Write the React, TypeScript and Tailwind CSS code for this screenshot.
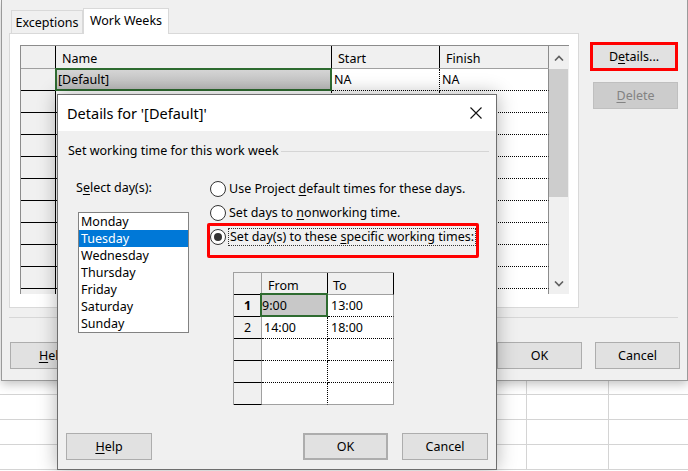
import type { ReactNode } from "react";

const ui = "font-['Noto_Sans',sans-serif]";

function U({ children }: { children: ReactNode }) {
  return <span className="underline underline-offset-[2px] decoration-1">{children}</span>;
}

function WinButton({
  children,
  className = "",
}: {
  children: ReactNode;
  className?: string;
}) {
  return (
    <div
      className={`h-[27px] flex items-center justify-center bg-[#e1e1e1] border border-[#adadad] text-black ${className}`}
    >
      {children}
    </div>
  );
}

function Chevron({ up }: { up?: boolean }) {
  return (
    <svg width="10" height="6" viewBox="0 0 10 6">
      <polyline
        points={up ? "1,5.5 5,1.5 9,5.5" : "1,0.5 5,4.5 9,0.5"}
        fill="none"
        stroke="#606060"
        strokeWidth="1.6"
      />
    </svg>
  );
}

function Radio({ checked }: { checked?: boolean }) {
  return (
    <div className="w-[16px] h-[16px] rounded-full border border-[#333] bg-white flex items-center justify-center shrink-0">
      {checked && <div className="w-[8px] h-[8px] rounded-full bg-[#333]" />}
    </div>
  );
}

function WeeksGrid() {
  const rows = Array.from({ length: 11 });
  return (
    <div className="flex w-[549px] h-[249px] border-t border-l border-[#8c8c8c] overflow-hidden">
      <div className="w-[528px] flex flex-col">
        <div className="flex h-[23px] shrink-0 bg-[#f0f0f0] border-b border-[#a0a0a0]">
          <div className="w-[35px] border-r border-black" />
          <div className="w-[276px] border-r border-black pl-[6px] pt-[5px]">Name</div>
          <div className="w-[108px] border-r border-black pl-[6px] pt-[5px]">Start</div>
          <div className="w-[109px] border-r border-[#8c8c8c] pl-[6px] pt-[5px]">Finish</div>
        </div>
        {rows.map((_, i) => (
          <div key={i} className="flex h-[22px] shrink-0">
            <div className="w-[35px] bg-[#f0f0f0] border-r border-b border-black" />
            <div className="w-[276px] relative border-r border-b border-dotted border-black bg-white">
              {i === 0 && (
                <div className="absolute -inset-px border-2 border-[#2e6b30] bg-linear-to-b from-[#d4d4d4] to-[#bdbdbd] pl-px pt-[2px] z-10">
                  [Default]
                </div>
              )}
            </div>
            <div className="w-[108px] border-r border-b border-dotted border-black bg-white pl-[2px] pt-[3px]">
              {i === 0 ? "NA" : ""}
            </div>
            <div className="w-[109px] border-r border-b border-dotted border-b-black border-r-[#8c8c8c] [border-right-style:solid] bg-white pl-[2px] pt-[3px]">
              {i === 0 ? "NA" : ""}
            </div>
          </div>
        ))}
      </div>
      <div className="w-[20px] bg-[#f0f0f0] flex flex-col">
        <div className="h-[23px] flex items-center justify-center">
          <Chevron up />
        </div>
        <div className="h-[128px] bg-[#cdcdcd] mr-px" />
        <div className="flex-1" />
        <div className="h-[20px] flex items-center justify-center">
          <Chevron />
        </div>
      </div>
    </div>
  );
}

function TimeGrid() {
  const body = [
    { n: "1", from: "9:00", to: "13:00", bold: true },
    { n: "2", from: "14:00", to: "18:00" },
    { n: "", from: "", to: "" },
    { n: "", from: "", to: "" },
    { n: "", from: "", to: "" },
  ];
  return (
    <div className="w-[161px] border-l border-t border-[#a0a0a0] flex flex-col">
      <div className="flex h-[22px]">
        <div className="w-[28px] bg-[#f0f0f0] border-r border-b border-r-[#a0a0a0] border-b-black" />
        <div className="w-[66px] bg-[#f0f0f0] border-r border-b border-r-black border-b-[#a0a0a0] pl-[6px] pt-[5px]">
          From
        </div>
        <div className="w-[66px] bg-[#f0f0f0] border-r border-b border-r-black border-b-[#a0a0a0] pl-[5px] pt-[5px]">
          To
        </div>
      </div>
      {body.map((r, i) => {
        const last = i === body.length - 1;
        return (
          <div key={i} className="flex h-[22px]">
            <div
              className={`w-[28px] bg-[#f0f0f0] border-r border-b border-r-[#a0a0a0] border-b-black flex items-center justify-center ${
                r.bold ? "font-bold" : ""
              }`}
            >
              {r.n}
            </div>
            <div
              className={`w-[66px] relative bg-white border-r border-b border-dotted border-black pl-[2px] pt-[3px] ${
                last ? "[border-bottom-style:solid] border-b-[#a0a0a0]" : ""
              }`}
            >
              {i === 0 ? (
                <div className="absolute -left-[2px] -right-px -top-[2px] -bottom-px border-2 border-[#2e6b30] bg-[#c8c8c8] pt-[3px] z-10">
                  {r.from}
                </div>
              ) : (
                r.from
              )}
            </div>
            <div
              className={`w-[66px] bg-white border-r border-b border-r-[#a0a0a0] [border-bottom-style:dotted] pl-[3px] pt-[3px] ${
                last ? "border-b-[#a0a0a0] [border-bottom-style:solid]" : "border-b-black"
              }`}
            >
              {r.to}
            </div>
          </div>
        );
      })}
    </div>
  );
}

export default function App() {
  const days = ["Monday", "Tuesday", "Wednesday", "Thursday", "Friday", "Saturday", "Sunday"];
  return (
    <div className={`relative w-[688px] h-[471px] overflow-hidden bg-white text-[12.5px] leading-[16px] text-black ${ui}`}>
      {/* background: Change Working Time */}
      <div className="relative z-10 ml-px w-[687px] h-[381px] bg-[#f0f0f0] border-l border-r border-b border-[#9a9a9a] shadow-[0_3px_10px_rgba(0,0,0,0.25)] flex flex-col pl-[7px] pt-[8px]">
        <div className="flex">
          <div className="w-[570px] flex flex-col">
            <div className="flex items-end h-[25px]">
              <div className="ml-[2px] w-[72px] h-[23px] border-t border-l border-r border-[#d9d9d9] bg-[#f0f0f0] flex items-center justify-center pt-[2px]">
                Exceptions
              </div>
              <div className="relative z-10 -mb-px w-[86px] h-[26px] border-t border-l border-r border-[#d9d9d9] bg-white flex items-center justify-center pb-px">
                Work Weeks
              </div>
            </div>
            <div className="h-[275px] bg-white border border-[#d9d9d9] pt-[11px] pl-[10px]">
              <WeeksGrid />
            </div>
          </div>
          <div className="ml-[11px] mt-[34px] flex flex-col">
            <div className="w-[88px] h-[29px] border-[3px] border-[#ff0000] bg-[#e1e1e1] flex items-center justify-center">
              D<U>e</U>tails...
            </div>
            <div className="mt-[11px] ml-[3px] w-[85px] h-[27px] bg-[#cccccc] border border-[#bfbfbf] text-[#838383] flex items-center justify-center">
              <U>D</U>elete
            </div>
          </div>
        </div>
        <div className="mt-[9px] w-[669px] border-t border-[#d7d7d7]" />
        <div className="mt-[24px] flex pl-px pr-[7px]">
          <WinButton className="w-[85px]">
            <U>H</U>elp
          </WinButton>
          <div className="flex-1" />
          <WinButton className="w-[85px]">OK</WinButton>
          <WinButton className="ml-[13px] w-[85px]">Cancel</WinButton>
        </div>
      </div>

      {/* spreadsheet behind */}
      <div className="flex flex-col">
        {[14, 25, 25, 25].map((h, i) => (
          <div key={i} className="flex border-b border-[#d4d4d4]" style={{ height: h }}>
            <div className="w-[527px] border-r border-[#d4d4d4]" />
            <div className="w-[82px] border-r border-[#d4d4d4]" />
          </div>
        ))}
      </div>

      {/* Details dialog */}
      <div className="absolute left-[57px] top-[94px] z-20 w-[440px] h-[376px] border border-[#6e6e6e] bg-[#f0f0f0] shadow-[0_0_18px_rgba(0,0,0,0.3)] flex flex-col">
        <div className="h-[36px] bg-white flex items-center pl-[9px] pr-[14px]">
          <span className="text-[14.5px] leading-[20px] flex-1">Details for '[Default]'</span>
          <svg width="12" height="12" viewBox="0 0 12 12">
            <path d="M0.5 0.5 L11.5 11.5 M11.5 0.5 L0.5 11.5" stroke="#111" strokeWidth="1.1" />
          </svg>
        </div>
        <div className="pt-[12px] flex items-center pl-[10px] pr-[7px]">
          <span>Set working time for this work week</span>
          <div className="flex-1 ml-[2px] border-t border-[#d5d5d5]" />
        </div>
        <div className="mt-[18px] flex">
          <div className="w-[152px] pl-[18px]">
            <div className="h-[19px] pt-[3px]">
              S<U>e</U>lect day(s):
            </div>
            <div className="mt-[16px] ml-[2px] w-[111px] h-[121px] border border-[#828282] bg-white">
              {days.map((d) => (
                <div
                  key={d}
                  className={`h-[17px] pl-[2px] leading-[17px] ${
                    d === "Tuesday" ? "bg-[#0078d7] text-white" : ""
                  }`}
                >
                  {d}
                </div>
              ))}
            </div>
          </div>
          <div className="flex flex-col">
            <div className="h-[24px] flex items-center gap-[3px]">
              <Radio />
              <span>
                Use Project <U>d</U>efault times for these days.
              </span>
            </div>
            <div className="h-[24px] flex items-center gap-[3px]">
              <Radio />
              <span>
                Set days to <U>n</U>onworking time.
              </span>
            </div>
            <div className="relative h-[24px] flex items-center gap-[3px]">
              <Radio checked />
              <span className="outline-1 outline-dotted outline-[#333] px-px">
                Set day(s) to these <U>s</U>pecific working times:
              </span>
              <div className="absolute -left-[3px] -top-[2px] w-[272px] h-[35px] border-[3px] border-[#ff0000] rounded-[2px]" />
            </div>
            <div className="mt-[23px] ml-[23px]">
              <TimeGrid />
            </div>
          </div>
        </div>
        <div className="mt-auto pb-[9px] px-[8px] flex">
          <WinButton className="w-[86px]">
            <U>H</U>elp
          </WinButton>
          <div className="flex-1" />
          <WinButton className="w-[85px] border-2 border-[#0078d7]">OK</WinButton>
          <WinButton className="ml-[14px] w-[86px]">Cancel</WinButton>
        </div>
      </div>
    </div>
  );
}
